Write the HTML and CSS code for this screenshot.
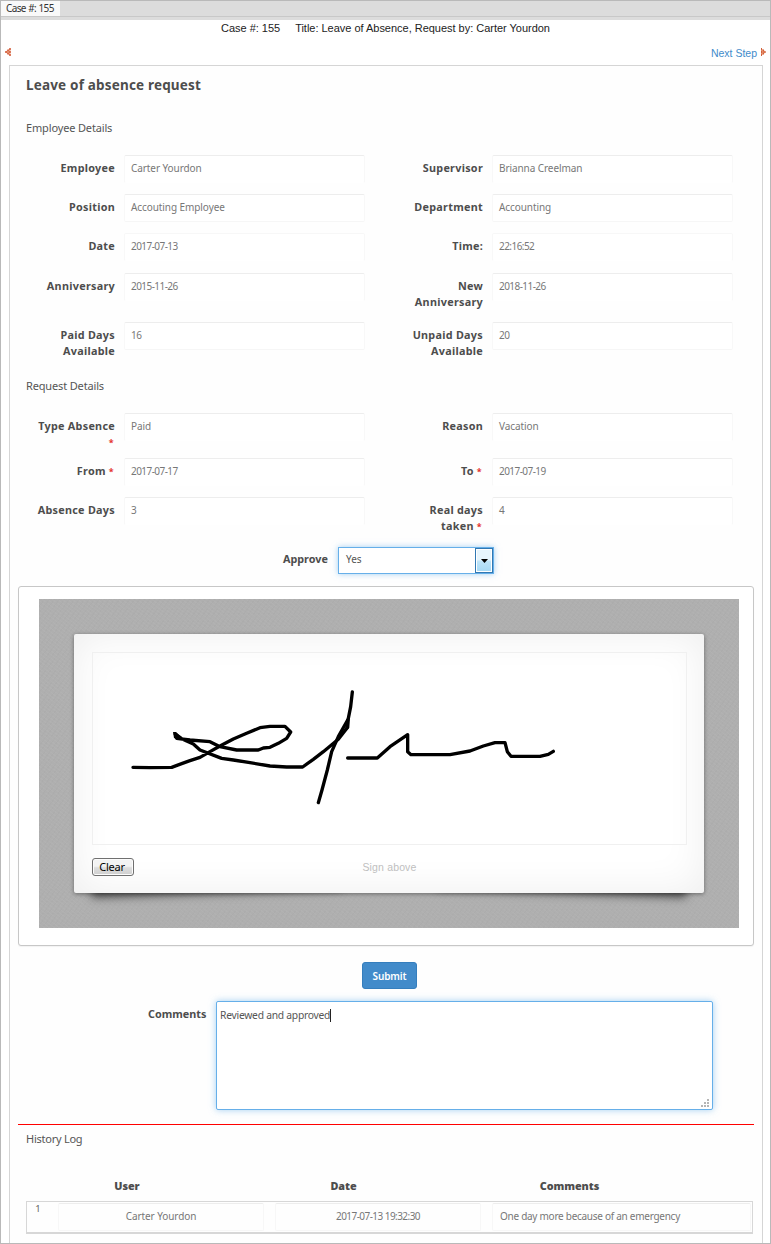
FILE: index.html
```html
<!DOCTYPE html>
<html lang="en">
<head>
<meta charset="utf-8">
<title>Leave of absence request</title>
<link rel="stylesheet" href="styles.css">
</head>
<body>
<div class="page">
  <div class="tabs"><div class="tab">Case #: 155</div></div>
  <div class="case"><span>Case #: 155</span><span>Title: Leave of Absence, Request by: Carter Yourdon</span></div>
  <div class="steps">
    <svg class="prev" width="6" height="8" viewBox="0 0 6 8"><path d="M5.500 0L0 4l5.500 4z" fill="#efaa8c"/><path d="M5 0v2M3 1.500v2M5 3v2M1 3v2M3 4.500v2M5 6v2" stroke="#cb4925" stroke-width="1.300"/></svg>
    <a class="next">Next Step</a>
    <svg class="fwd" width="5" height="8" viewBox="0 0 5 8"><path d="M0 0l5 4-5 4z" fill="#e58c68"/><path d="M.5 0v2M2.500 1.500v2M.5 3v2M4 3v2M2.500 4.500v2M.5 6v2" stroke="#d0603c" stroke-width="1"/></svg>
  </div>
  <form class="form">
    <h1>Leave of absence request</h1>
    <h2 class="employee-title">Employee Details</h2>
    <div class="row"><label>Employee</label><div class="field">Carter Yourdon</div><label>Supervisor</label><div class="field">Brianna Creelman</div></div>
    <div class="row"><label>Position</label><div class="field closed">Accouting Employee</div><label>Department</label><div class="field closed">Accounting</div></div>
    <div class="row date"><label>Date</label><div class="field faint num">2017-07-13</div><label>Time:</label><div class="field faint num">22:16:52</div></div>
    <div class="row tall"><label>Anniversary</label><div class="field num">2015-11-26</div><label>New<br>Anniversary</label><div class="field num">2018-11-26</div></div>
    <div class="row last"><label>Paid Days<br>Available</label><div class="field closed num">16</div><label>Unpaid Days<br>Available</label><div class="field closed num">20</div></div>
    <h2 class="request-title">Request Details</h2>
    <div class="row type"><label>Type Absence<br><i>*</i></label><div class="field">Paid</div><label>Reason</label><div class="field">Vacation</div></div>
    <div class="row"><label>From <i>*</i></label><div class="field num">2017-07-17</div><label>To <i>*</i></label><div class="field num">2017-07-19</div></div>
    <div class="row tall"><label>Absence Days</label><div class="field num">3</div><label>Real days<br>taken <i>*</i></label><div class="field num">4</div></div>
    <div class="approve">
      <label>Approve</label>
      <div class="select"><span>Yes</span><div class="arrow"><svg width="7" height="4" viewBox="0 0 7 4"><path d="M0 0h7L3.500 4z"/></svg></div></div>
    </div>
    <div class="panel">
      <div class="desk">
        <div class="paper">
          <div class="sheet">
            <div class="pad">
              <svg class="ink" width="593" height="191" viewBox="93 653 593 191">
                <g transform="translate(110 670) scale(.33333)" fill="none" stroke="#000" stroke-width="10" stroke-linecap="round" stroke-linejoin="round">
                  <path d="M69 292L120 293 185 292 215 281 240 272 270 262 300 245 330 228 370 207 410 190 450 173 480 169H525L542 186 530 205 505 220 480 232 460 234 445 240H380L330 230 300 215 240 210 200 205 196 192 215 206 250 222 270 240 335 265 370 270 420 278 480 288 530 291H578L610 268 640 245 685 208 713 172 715 145 722 110 727 66"/>
                  <path d="M713 150L685 200 665 245 652 300 636 360 625 398"/>
                  <path d="M713 264H802L840 230 893 194V245L903 254H1020L1080 243 1120 228 1155 218H1185L1192 245 1203 259H1290L1315 253 1330 244"/>
                </g>
                <path d="M173 732l3 0 6 6-3 2-5-2z"/>
                <path d="M346 720l3-5v13l-4 4z"/>
              </svg>
            </div>
            <div class="pad-foot"><button type="button" class="clear">Clear</button><span class="hint">Sign above</span></div>
          </div>
        </div>
      </div>
    </div>
    <div class="actions"><button type="button" class="submit">Submit</button></div>
    <div class="comments">
      <label>Comments</label>
      <div class="textarea"><span>Reviewed and approved</span><svg class="grip" width="8" height="8" viewBox="0 0 8 8"><path d="M6 0h2v2H6zM3 3h2v2H3zM6 3h2v2H6zM0 6h2v2H0zM3 6h2v2H3zM6 6h2v2H6z" fill="#b5b5b5"/></svg></div>
    </div>
    <div class="rule"></div>
    <h2 class="history-title">History Log</h2>
    <div class="grid-head"><b>User</b><b>Date</b><b>Comments</b></div>
    <div class="grid-row"><span class="index">1</span><div class="cell">Carter Yourdon</div><div class="cell num">2017-07-13 19:32:30</div><div class="cell wide">One day more because of an emergency</div></div>
  </form>
</div>
</body>
</html>
```
FILE: styles.css
```css
* { box-sizing: border-box; }
body { margin: 0; background: #fff; font-family: "Noto Sans", sans-serif; font-size: 10.5px; color: #666; }
.page { width: 771px; height: 1244px; border: 1px solid #b9b9b9; overflow: hidden; display: flex; flex-direction: column; }
.tabs { height: 19px; flex: none; background: linear-gradient(#dcdcdc 15px, #c8c8c8 15px, #c8c8c8 16px, #dcdcdc 16px); }
.tab { width: 59px; height: 15px; background: #f9f9f9; padding-left: 5px; font-size: 10px; line-height: 15px; letter-spacing: -.65px; word-spacing: .5px; color: #333; white-space: nowrap; }
.case { height: 17px; flex: none; display: flex; justify-content: center; gap: 15px; font: 11px/17px "Liberation Sans", Arial, sans-serif; color: #222; }
.case span { letter-spacing: -.02px; }
.steps { height: 28px; flex: none; display: flex; align-items: flex-start; padding: 11px 4px 0; }
.prev { flex: none; }
.next { margin-left: auto; margin-right: 4px; font: 10.5px/11px "Liberation Sans", Arial, sans-serif; color: #428bca; }
.fwd { flex: none; }
.form { width: 754px; margin-left: 8px; flex: none; height: 1180px; border: 1px solid #d5d5d5; border-bottom: 0; background: #fefefe; }
h1 { margin: 9px 0 0 16px; font-size: 13.500px; line-height: 20px; letter-spacing: .18px; color: #4d4d4d; }
h2 { margin: 0 0 0 16px; font-size: 11px; line-height: 16px; font-weight: 400; color: #555; }
.employee-title { margin-top: 25px; letter-spacing: -.15px; }
.row { display: grid; grid-template-columns: 114px 241px 127px 241px; height: 39px; align-items: start; }
.employee-title + .row { margin-top: 19px; }
.date { height: 40px; }
.tall { height: 49px; }
.last { height: 56px; }
.type { height: 45px; margin-top: 19px; }
label, .grid-head { font-weight: 700; font-size: 10.800px; line-height: 16px; color: #4d4d4d; }
.row label { text-align: right; padding: 5px 9px 0 0; letter-spacing: .28px; }
label i { font-style: normal; color: #e4312b; font-size: 9px; margin-right: 1px; }
.field { height: 28px; border: 1px solid #f8f8f8; border-top: 1px solid #ededed; border-bottom-color: transparent; border-radius: 2px; padding-left: 6px; font-size: 10px; line-height: 24px; letter-spacing: -.08px; color: #777; background: #fff; }
.closed { border-bottom-color: #f6f6f6; }
.faint { border-top-color: #f7f7f7; }
.num { letter-spacing: -.55px; }
.request-title { letter-spacing: -.15px; }
.approve { display: flex; align-items: flex-start; padding-left: 273px; height: 39px; margin-top: 1px; }
.approve label { width: 55px; padding-top: 4px; }
.select { width: 156px; height: 27px; border: 1px solid #66afe9; box-shadow: 0 0 6px rgba(102,175,233,.6); display: flex; justify-content: space-between; background: #fff; }
.select span { padding-left: 7px; line-height: 23px; font-size: 10px; color: #555; }
.arrow { width: 18px; height: 25px; border: 1px solid #3078b3; box-shadow: inset 0 0 0 1px #fff; background: linear-gradient(#e6f5fd 45%, #bde4f9 55%, #a5d9f5); display: flex; align-items: center; justify-content: center; }
.panel { width: 736px; height: 360px; margin-left: 8px; border: 1px solid #c7c7c7; border-radius: 3px; box-shadow: 0 1px 1px rgba(0,0,0,.05); padding: 12px 20px 0; background: #fff; }
.desk { width: 700px; height: 329px; padding: 35px 35px 0; background: repeating-linear-gradient(37deg, rgba(255,255,255,.03) 0 1px, transparent 1px 3px), repeating-linear-gradient(127deg, rgba(0,0,0,.015) 0 1px, transparent 1px 4px), #afafaf; }
.paper { width: 630px; height: 259px; position: relative; z-index: 0; }
.paper::before, .paper::after { content: ""; position: absolute; z-index: -1; bottom: 11px; width: 250px; height: 20px; box-shadow: 0 11px 10px rgba(0,0,0,.6); }
.paper::before { left: 17px; transform: rotate(-2deg); }
.paper::after { right: 17px; transform: rotate(2deg); }
.sheet { height: 259px; padding: 18px 17px 0 18px; border-radius: 2px; background: #fff; box-shadow: 0 1px 4px rgba(0,0,0,.4), inset 0 0 40px rgba(0,0,0,.07); }
.pad { height: 193px; border: 1px solid #f0f0f0; }
.ink { display: block; }
.pad-foot { display: grid; grid-template-columns: 1fr auto 1fr; margin-top: 13px; height: 18px; align-items: center; }
.clear { width: 42px; height: 18px; border: 1px solid #707070; border-radius: 3px; padding: 0; background: linear-gradient(#f3f3f3 45%, #dddddd 55%, #cfcfcf); box-shadow: inset 0 0 0 1px #fcfcfc; font: 11px/14px "Noto Sans", sans-serif; letter-spacing: -.2px; color: #000; padding-right: 2px; }
.hint { font: 10.500px/16px "Liberation Sans", Arial, sans-serif; letter-spacing: .15px; color: #bfbfbf; }
.actions { padding: 16px 0 0 352px; height: 55px; }
.submit { display: block; width: 55px; height: 27px; padding: 0; border: 1px solid #357ebd; border-radius: 3px; background: #428bca; color: #fff; font: 600 10px/24px "Noto Sans", sans-serif; letter-spacing: -.1px; }
.comments { display: flex; padding-left: 138px; height: 123px; }
.comments label { width: 68px; padding-top: 5px; }
.textarea { width: 497px; height: 109px; border: 1px solid #66afe9; border-radius: 2px; box-shadow: 0 0 7px rgba(102,175,233,.6); position: relative; padding: 6px 3px; background: #fff; }
.textarea span { display: inline-block; height: 13px; line-height: 13px; border-right: 1px solid #222; font-size: 10.300px; letter-spacing: -.25px; color: #555; }
.grip { position: absolute; right: 3px; bottom: 2px; }
.rule { margin: 0 8px; height: 1px; background-color: rgb(255, 0, 0); }
.history-title { margin-top: 6px; letter-spacing: -.25px; }
.grid-head { display: grid; grid-template-columns: 206px 227px 225px; padding-left: 14px; margin-top: 31px; height: 23px; text-align: center; letter-spacing: -.05px; }
.grid-row { margin-left: 16px; width: 727px; height: 33px; border: 1px solid #d7d7d7; border-bottom-width: 2px; padding: 1px 0 0; display: grid; grid-template-columns: 31px 206px 206px 259px; column-gap: 0; }
.index { text-align: center; line-height: 12px; padding-right: 9px; font-size: 9.500px; }
.cell { height: 28px; border: 1px solid #f7f7f7; border-top-color: #ededed; border-radius: 2px; text-align: center; font-size: 10px; line-height: 25px; letter-spacing: -.08px; color: #777; }
.cell.num { letter-spacing: -.55px; }
.cell + .cell { margin-left: 11px; margin-right: -11px; }
.cell + .cell.wide { margin-left: 22px; margin-right: -22px; text-align: left; padding-left: 7px; letter-spacing: -.27px; }
```
